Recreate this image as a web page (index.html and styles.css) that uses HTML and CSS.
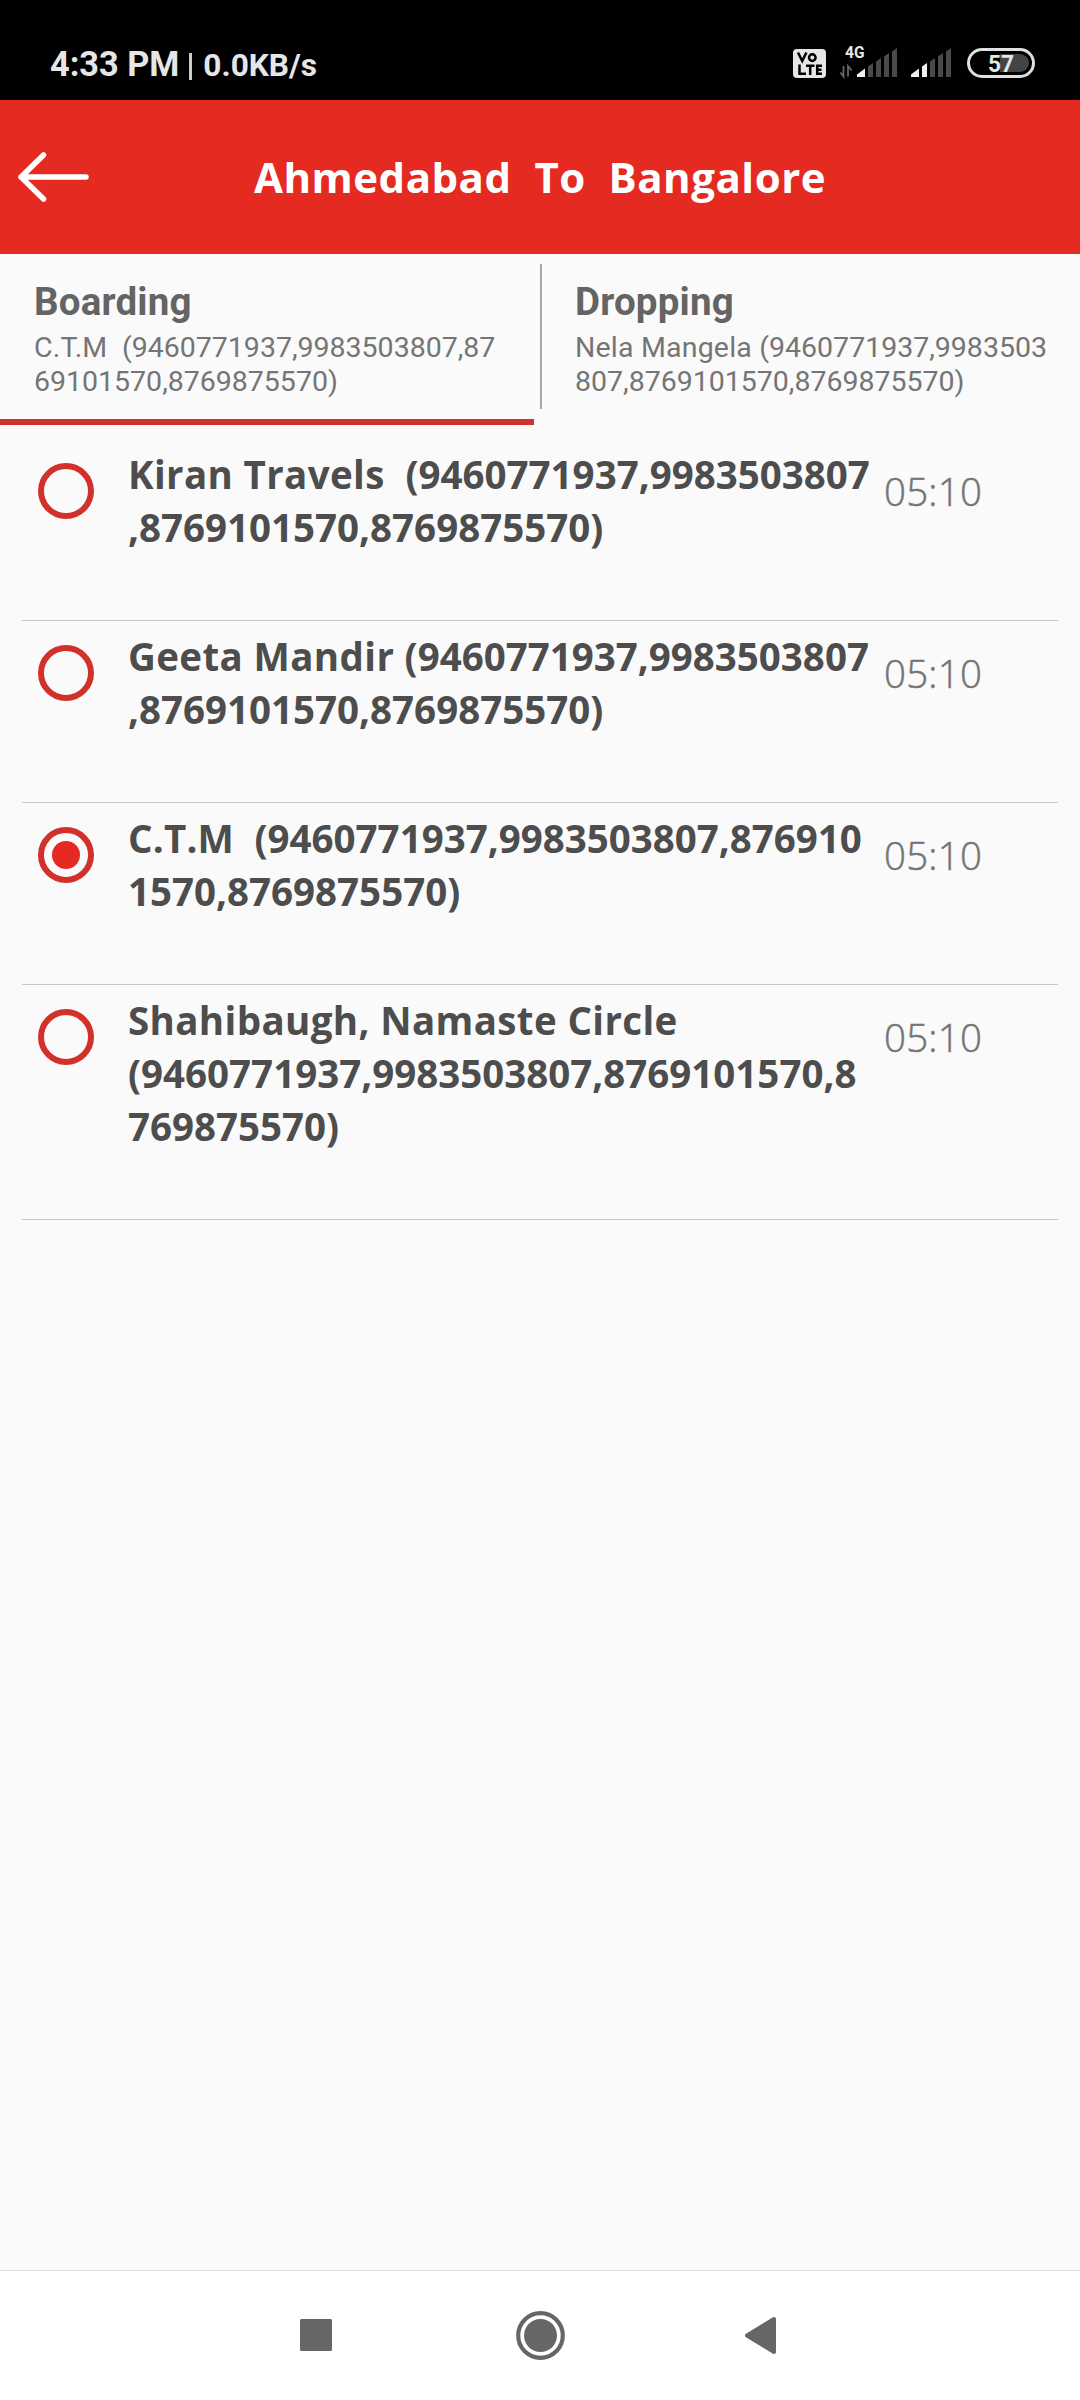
FILE: index.html
```html
<!DOCTYPE html>
<html lang="en">
<head>
<meta charset="utf-8">
<title>Boarding point</title>
<link rel="stylesheet" href="styles.css">
</head>
<body>
<div class="screen">
  <div class="status">
    <div class="status-left"><span class="clock">4:33 PM</span><span class="bar"></span><span class="rate">0.0KB/s</span></div>
    <svg class="status-icons" width="250" height="40" viewBox="790 43 250 40">
      <rect x="793" y="49" width="33" height="29" rx="4" fill="#e6e6e6"/>
      <g fill="none" stroke="#000" stroke-width="2.5">
        <path d="M798 52.500l4.200 8.500 4.200-8.500"/><circle cx="812.300" cy="57.600" r="3.300"/>
        <path d="M799.500 64.500v9.300h6.500M806 65.700h8.500M810.200 65.700v9.300M822 65.700h-4.800v8h4.800M817 69.800h4.500"/>
      </g>
      <text x="845" y="58" class="net" textLength="19.500" lengthAdjust="spacingAndGlyphs">4G</text>
      <path d="M843.500 66v10.500l-3-4M848 76.500V66l3.500 4.500" stroke="#666" stroke-width="1.800" fill="none"/>
      <path d="M857 77v-2.500l8-6V77z" fill="#f0f0f0"/>
      <path d="M868 77V66.500l5-3.500v14zM876 77V61.500l5-3.500v19zM884 77V56.500l5-3.500v24zM892 77V51.500l5-3.500v29z" fill="#4a4a4a"/>
      <path d="M911 77v-2.500l8-6V77zM922 77V66.500l5-3.500v14z" fill="#f0f0f0"/>
      <path d="M930 77V61.500l5-3.500v19zM938 77V56.500l5-3.500v24zM946 77V51.500l5-3.500v29z" fill="#4a4a4a"/>
      <rect x="968.500" y="49.500" width="65" height="27" rx="13.500" fill="#000" stroke="#e0e0e0" stroke-width="3"/>
      <path d="M1000 54h20a9 9 0 0 1 0 18h-20z" fill="#444"/>
      <text x="988" y="71.500" class="level" textLength="26" lengthAdjust="spacingAndGlyphs">57</text>
    </svg>
  </div>
  <header class="header">
    <svg class="back" width="74" height="52" viewBox="0 0 74 52" fill="none" stroke="#fff" stroke-width="5.500" stroke-linecap="round" stroke-linejoin="round"><path d="M69 26H4M26.500 4L4 26l22.500 22"/></svg>
    <h1>Ahmedabad&nbsp; To&nbsp; Bangalore</h1>
  </header>
  <div class="tabs">
    <div class="tab active"><h2>Boarding</h2><p><span class="place">C.T.M&nbsp; </span>(9460771937,9983503807,87<br>69101570,8769875570)</p></div>
    <div class="divider"></div>
    <div class="tab"><h2>Dropping</h2><p><span class="place">Nela Mangela </span>(9460771937,9983503<br>807,8769101570,8769875570)</p></div>
  </div>
  <main class="list">
    <div class="item"><span class="radio"></span><p><span class="name">Kiran Travels&nbsp; </span>(9460771937,9983503807<br>,8769101570,8769875570)</p><time>05:10</time></div>
    <div class="item"><span class="radio"></span><p><span class="name">Geeta Mandir </span>(9460771937,9983503807<br>,8769101570,8769875570)</p><time>05:10</time></div>
    <div class="item"><span class="radio checked"></span><p><span class="place">C.T.M&nbsp; </span>(9460771937,9983503807,876910<br>1570,8769875570)</p><time>05:10</time></div>
    <div class="item"><span class="radio"></span><p><span class="name">Shahibaugh, Namaste Circle</span><br>(9460771937,9983503807,8769101570,8<br>769875570)</p><time>05:10</time></div>
  </main>
  <nav class="nav">
    <svg width="1080" height="129" viewBox="0 2271 1080 129" fill="#666">
      <rect x="300" y="2319" width="32" height="32" rx="1.500"/>
      <circle cx="540.500" cy="2335.500" r="22.300" fill="none" stroke="#666" stroke-width="4.200"/>
      <circle cx="540.500" cy="2335.500" r="16.500"/>
      <path d="M747 2335.500L774 2319v33z" stroke="#666" stroke-width="4" stroke-linejoin="round"/>
    </svg>
  </nav>
</div>
</body>
</html>
```
FILE: styles.css
```css
* { box-sizing: border-box; }
body { margin: 0; background: #fafafa; }
h1, h2, p { margin: 0; }
.screen { width: 1080px; height: 2400px; display: flex; flex-direction: column; background: #fafafa; }

.status { height: 100px; flex: none; background: #000; display: flex; justify-content: space-between; padding: 43px 40px 0 50px; font-family: Roboto, sans-serif; font-weight: 700; color: #e6e6e6; }
.status-left { display: flex; height: 42px; align-items: baseline; white-space: nowrap; line-height: 42px; }
.clock { font-size: 34.3px; }
.bar { width: 3px; height: 27px; margin: 10px 11px 0 10px; background: #ccc; align-self: flex-start; }
.rate { font-size: 31.6px; }
.status-icons { display: block; }
.net { font: 700 16px Roboto, sans-serif; fill: #e6e6e6; }
.level { font: 700 24px Roboto, sans-serif; fill: #e6e6e6; }

.header { height: 154px; flex: none; background: #e52a22; display: grid; grid-template-columns: 110px 1fr 110px; align-items: center; font-family: "Open Sans", sans-serif; }
.back { margin-left: 17px; }
.header h1 { text-align: center; color: #fff; font-size: 42px; line-height: 60px; font-weight: 700; letter-spacing: 0.5px; white-space: nowrap; }

.tabs { height: 171px; flex: none; display: flex; font-family: Roboto, sans-serif; }
.tab { width: 534px; padding: 25px 0 0 33px; white-space: nowrap; }
.tab.active { padding-left: 34px; border-bottom: 6px solid #ce342e; margin-right: 6px; }
.divider { width: 2px; height: 145px; margin-top: 10px; background: #a6a6a6; }
.tab h2 { font-size: 38.5px; line-height: 46px; color: #646464; letter-spacing: 0.2px; }
.tab p { font-size: 28.5px; line-height: 34px; color: #757575; margin-top: 6px; }
.place { letter-spacing: 0.2px; }

.list { flex: 1; padding: 14px 22px 0; font-family: "Open Sans", sans-serif; }
.item { display: grid; grid-template-columns: 106px 756px 1fr; align-items: start; padding: 9px 0 66px; border-bottom: 1px solid #c8c8c8; }
.item p { font-size: 38.5px; line-height: 53px; font-weight: 700; color: #4d4d4d; white-space: nowrap; }
.name { letter-spacing: 0.37px; }
.item time { font-size: 38.5px; line-height: 53px; font-weight: 300; letter-spacing: 0.2px; color: #757575; -webkit-text-stroke: 0.5px #757575; margin-top: 17px; }
.radio { width: 56px; height: 56px; border: 6px solid #d2302a; border-radius: 50%; margin: 15px 0 0 16px; display: grid; place-items: center; }
.radio.checked::after { content: ""; width: 28px; height: 28px; border-radius: 50%; background: #e52a22; }

.nav { height: 130px; flex: none; background: #fff; border-top: 1px solid #e2e2e2; }
.nav svg { display: block; }
```
